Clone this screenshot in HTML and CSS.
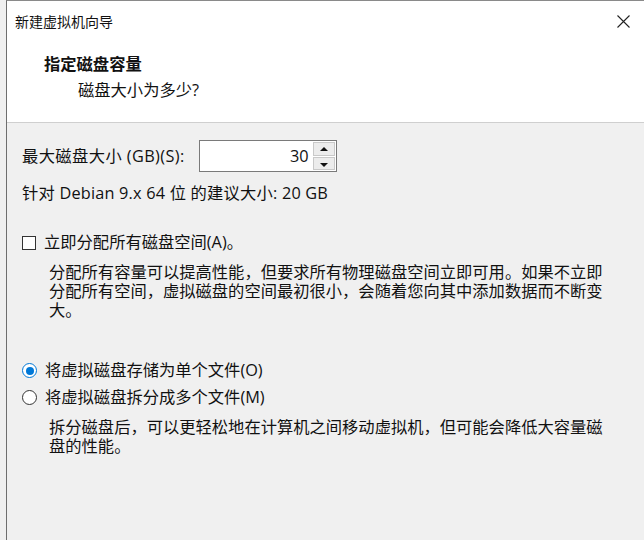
FILE: index.html
```html
<!DOCTYPE html>
<html lang="zh-CN">
<head>
    <meta charset="UTF-8">
    <meta name="viewport" content="width=device-width, initial-scale=1.0">
    <title>新建虚拟机向导</title>
    <link rel="stylesheet" href="styles.css">
</head>
<body>
    <div class="wizard">
        <div class="titlebar">
            <span class="title">新建虚拟机向导</span>
            <svg class="close" width="13" height="13" viewBox="0 0 13 13">
                <path d="M0.5 0.5 L12.5 12.5 M12.5 0.5 L0.5 12.5" stroke="#222" stroke-width="1.1" fill="none"/>
            </svg>
        </div>

        <div class="header">
            <div class="heading">指定磁盘容量</div>
            <div class="subheading">磁盘大小为多少?</div>
        </div>

        <div class="content">
            <div class="size-row">
                <label for="size">最大磁盘大小 (GB)(S):</label>
                <div class="spinbox">
                    <input type="text" id="size" value="30">
                    <div class="spin-buttons">
                        <span class="spin up"></span>
                        <span class="spin down"></span>
                    </div>
                </div>
            </div>
            <div class="hint">针对 Debian 9.x 64 位 的建议大小: 20 GB</div>

            <div class="check-row">
                <span class="checkbox"></span>
                <span>立即分配所有磁盘空间(A)。</span>
            </div>
            <p class="note">分配所有容量可以提高性能，但要求所有物理磁盘空间立即可用。如果不立即分配所有空间，虚拟磁盘的空间最初很小，会随着您向其中添加数据而不断变大。</p>

            <div class="radio-group">
                <div class="radio-row">
                    <span class="radio checked"></span>
                    <span>将虚拟磁盘存储为单个文件(O)</span>
                </div>
                <div class="radio-row">
                    <span class="radio"></span>
                    <span>将虚拟磁盘拆分成多个文件(M)</span>
                </div>
            </div>
            <p class="note">拆分磁盘后，可以更轻松地在计算机之间移动虚拟机，但可能会降低大容量磁盘的性能。</p>
        </div>
    </div>
</body>
</html>
```

FILE: styles.css
```css
body {
    margin: 0;
    font-family: "Open Sans", "Noto Sans CJK SC", sans-serif;
    color: #111;
    background: #f0f0f0;
}
.wizard {
    margin-left: 6px;
    height: 539px;
    border-left: 1px solid #6e6e6e;
    border-top: 1px solid #8a8a8a;
    display: flex;
    flex-direction: column;
    background: #f0f0f0;
}
.titlebar {
    height: 40px;
    background: white;
    display: flex;
    align-items: center;
    justify-content: space-between;
    padding: 0 14px 0 8px;
}
.title {
    font-size: 14px;
}
.close {
    margin-top: 1px;
}
.header {
    background: white;
    height: 81px;
    border-bottom: 1px solid #cfcfcf;
    padding-left: 37px;
}
.heading {
    font-size: 16.3px;
    font-weight: bold;
    line-height: 19px;
    margin-top: 14px;
}
.subheading {
    font-size: 16.3px;
    line-height: 19px;
    margin-top: 7px;
    padding-left: 34px;
}
.content {
    flex: 1;
    padding: 17px 0 0 15px;
    font-size: 16.3px;
    line-height: 19px;
}
.size-row {
    display: flex;
    align-items: center;
    gap: 14px;
}
.size-row label {
    letter-spacing: 0.4px;
}
.spinbox {
    display: flex;
    width: 136px;
    height: 30px;
    border: 1px solid #7a7a7a;
    background: white;
}
.spinbox input {
    flex: 1;
    width: 0;
    border: none;
    outline: none;
    text-align: right;
    font: inherit;
    padding: 0 4px 0 0;
    color: #111;
}
.spin-buttons {
    width: 22px;
    display: flex;
    flex-direction: column;
    gap: 1px;
    padding: 1px 1px 1px 0;
}
.spin {
    flex: 1;
    background: #ececec;
    border: 1px solid #c9c9c9;
    position: relative;
}
.spin::after {
    content: "";
    position: absolute;
    left: 6px;
    border-left: 4px solid transparent;
    border-right: 4px solid transparent;
}
.up::after {
    top: 4px;
    border-bottom: 4px solid #111;
}
.down::after {
    top: 5px;
    border-top: 4px solid #111;
}
.hint {
    margin-top: 12px;
    letter-spacing: 0.2px;
}
.check-row,
.radio-row {
    display: flex;
    align-items: center;
    gap: 8px;
}
.check-row {
    margin-top: 30px;
}
.checkbox {
    width: 12px;
    height: 12px;
    border: 1px solid #333;
    background: white;
}
.note {
    width: 560px;
    margin: 11px 0 0 27px;
}
.radio-group {
    margin-top: 41px;
    display: flex;
    flex-direction: column;
    gap: 8px;
}
.radio {
    width: 13px;
    height: 13px;
    border: 1px solid #333;
    border-radius: 50%;
    background: white;
    position: relative;
}
.radio.checked {
    border-color: #0078d7;
}
.radio.checked::after {
    content: "";
    position: absolute;
    left: 2.5px;
    top: 2.5px;
    width: 8px;
    height: 8px;
    border-radius: 50%;
    background: #0078d7;
}
```
